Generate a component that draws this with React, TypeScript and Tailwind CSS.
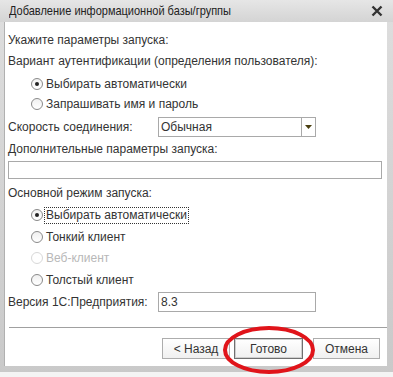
import React from "react";

const font = { fontFamily: '"Liberation Sans", Arial, sans-serif' };

function Radio({ label, checked, disabled, focused, mt }: { label: string; checked?: boolean; disabled?: boolean; focused?: boolean; mt: string }) {
  return (
    <div className={`flex items-center h-[20px] pl-[23px] ${mt}`}>
      <span
        className={`w-[12px] h-[12px] rounded-full border flex items-center justify-center ${
          disabled ? "border-[#d8d8d8] bg-white" : "border-[#8a8a8a] bg-gradient-to-b from-[#f0f0f0] to-white"
        }`}
      >
        {checked && <span className="w-[4px] h-[4px] rounded-full bg-[#222]" />}
      </span>
      <span
        className={`ml-[2px] px-[1px] leading-[15px] ${disabled ? "text-[#b8b8b8]" : "text-[#333]"} ${
          focused ? "outline outline-1 outline-dotted outline-[#333]" : ""
        }`}
      >
        {label}
      </span>
    </div>
  );
}

export default function App() {
  return (
    <div
      className="relative w-[393px] h-[377px] bg-gradient-to-b from-[#dedede] to-[#c9c9c9] flex flex-col text-[12px]"
      style={font}
    >
      <div className="h-[22px] flex items-center justify-between pl-[9px] pr-[10px] bg-gradient-to-b from-[#e6e6e6] to-[#d4d4d4]">
        <span className="text-[11px] text-[#222] scale-y-110">Добавление информационной базы/группы</span>
        <svg width="12" height="12" viewBox="0 0 12 12">
          <path d="M1.5 1.5 L10.5 10.5 M10.5 1.5 L1.5 10.5" stroke="#333" strokeWidth="2.4" />
        </svg>
      </div>
      <div className="ml-[4px] mr-[6px] h-[344px] bg-white border-l border-[#b0b0b0] flex flex-col pl-[3px] text-[#333]">
        <div className="h-[20px] mt-[8px] flex items-center">Укажите параметры запуска:</div>
        <div className="h-[20px] mt-[1px] flex items-center">Вариант аутентификации (определения пользователя):</div>
        <Radio mt="mt-[3px]" label="Выбирать автоматически" checked />
        <Radio mt="mt-0" label="Запрашивать имя и пароль" />
        <div className="h-[20px] mt-[3px] flex items-center">
          <span className="w-[150px]">Скорость соединения:</span>
          <div className="w-[158px] h-[20px] border border-[#a9a9a9] flex items-stretch">
            <span className="flex-1 pl-[2px] flex items-center">Обычная</span>
            <span className="w-[14px] border-l border-[#a9a9a9] flex items-center justify-center">
              <svg width="7" height="4" viewBox="0 0 7 4">
                <path d="M0 0 H7 L3.5 4 Z" fill="#4a3f10" />
              </svg>
            </span>
          </div>
        </div>
        <div className="h-[20px] mt-[2px] flex items-center">Дополнительные параметры запуска:</div>
        <div className="w-[374px] h-[18px] mt-[2px] border border-[#a9a9a9]" />
        <div className="h-[20px] mt-[4px] flex items-center">Основной режим запуска:</div>
        <Radio mt="mt-[2px]" label="Выбирать автоматически" checked focused />
        <Radio mt="mt-[2px]" label="Тонкий клиент" />
        <Radio mt="mt-[1px]" label="Веб-клиент" disabled />
        <Radio mt="mt-[2px]" label="Толстый клиент" />
        <div className="h-[20px] mt-[2px] flex items-center">
          <span className="w-[150px]">Версия 1С:Предприятия:</span>
          <div className="w-[158px] h-[20px] border border-[#a9a9a9] pl-[2px] flex items-center">8.3</div>
        </div>
        <div className="h-px bg-[#a0a0a0] mt-[15px] ml-[1px]" />
        <div className="flex mt-[10px] h-[21px] pl-[154px]">
          <div className="w-[68px] border border-[#adadad] bg-gradient-to-b from-white to-[#f0f0f0] flex items-center justify-center">
            &lt; Назад
          </div>
          <div className="w-[69px] ml-[4px] border border-[#707070] bg-gradient-to-b from-white to-[#f0f0f0] flex items-center justify-center shadow-[inset_0_0_0_1px_#cfcfcf]">
            Готово
          </div>
          <div className="w-[67px] ml-[10px] border border-[#adadad] bg-gradient-to-b from-white to-[#f0f0f0] flex items-center justify-center">
            Отмена
          </div>
        </div>
      </div>
      <div className="h-[6px]" />
      <div className="flex-1 bg-[#f4f4f4]" />
      <svg className="absolute left-[222px] top-[324px]" width="94" height="52" viewBox="0 0 94 52">
        <ellipse cx="47" cy="26" rx="44" ry="22" fill="none" stroke="#e0141a" strokeWidth="4" />
      </svg>
    </div>
  );
}
